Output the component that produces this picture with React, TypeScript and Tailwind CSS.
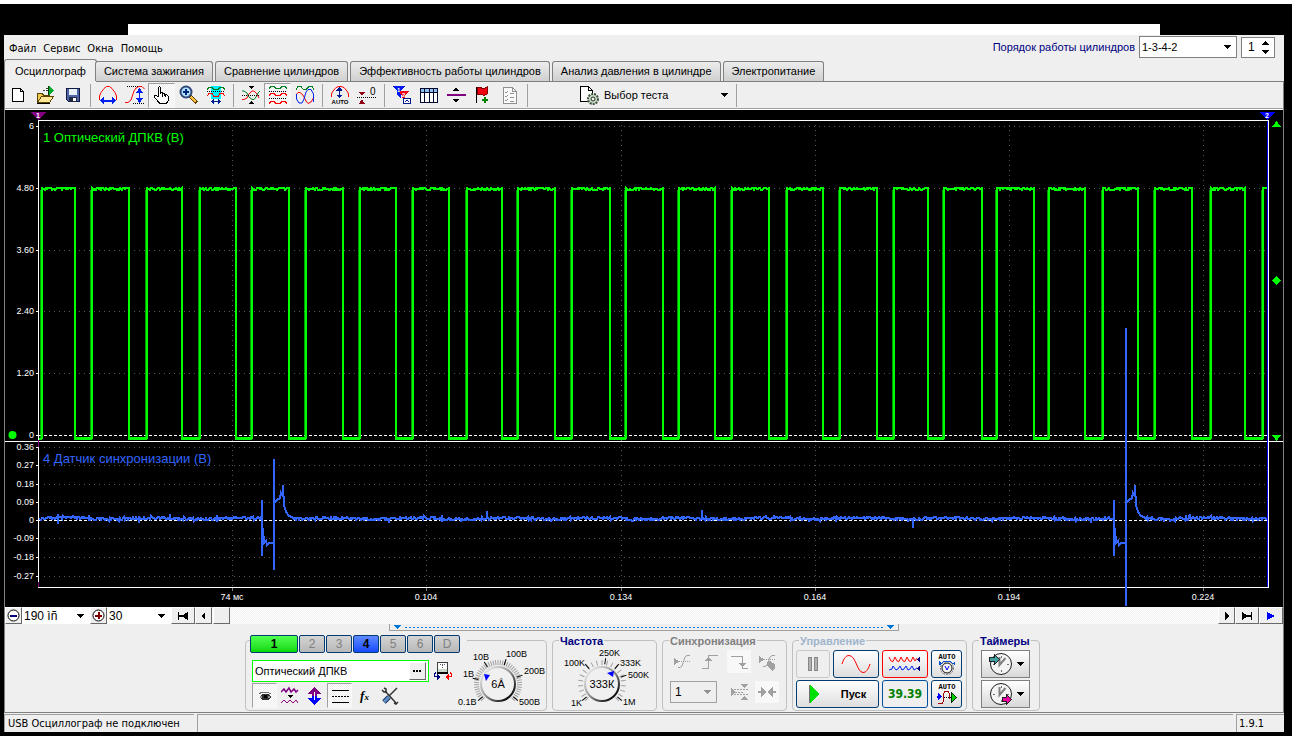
import { useState } from 'react';
import type { ReactNode } from 'react';
import clsx from 'clsx';

const tabs = [
  'Осциллограф',
  'Система зажигания',
  'Сравнение цилиндров',
  'Эффективность работы цилиндров',
  'Анализ давления в цилиндре',
  'Электропитание',
];

// start and end of every high level of the crank sensor signal
const pulses = [
  [42, 75], [92, 129], [147, 182], [200, 236], [252, 289], [306, 343], [360, 396], [413, 449],
  [467, 502], [518, 555], [572, 610], [626, 663], [679, 715], [732, 769], [787, 823], [840, 877],
  [894, 928], [944, 982], [997, 1034], [1049, 1085], [1103, 1138], [1155, 1192], [1211, 1245], [1263, 1267],
];

const upperScale = [
  { y: 126, label: '6' },
  { y: 188, label: '4.80' },
  { y: 250, label: '3.60' },
  { y: 311, label: '2.40' },
  { y: 373, label: '1.20' },
  { y: 435, label: '0' },
];

const lowerScale = [
  { y: 447, label: '0.36' },
  { y: 465, label: '0.27' },
  { y: 484, label: '0.18' },
  { y: 502, label: '0.09' },
  { y: 520, label: '0' },
  { y: 538, label: '-0.09' },
  { y: 557, label: '-0.18' },
  { y: 576, label: '-0.27' },
];

const timeScale = [
  { x: 232, label: '74 мс' },
  { x: 426, label: '0.104' },
  { x: 621, label: '0.134' },
  { x: 815, label: '0.164' },
  { x: 1009, label: '0.194' },
  { x: 1203, label: '0.224' },
];

const noise = (n: number) => {
  const v = Math.sin(n * 12.9898) * 43758.5453;
  return v - Math.floor(v);
};

const crankPath = () => {
  let d = 'M39 439 L41 439';
  pulses.forEach(([start, end], i) => {
    d += ` L${start} 438 L${start} 188`;
    for (let x = start + 2; x < end - 1; x += 1) {
      d += ` L${x} ${188 + Math.floor(noise(x) * 2.6)}`;
    }
    d += ` L${end} 188`;
    if (i < pulses.length - 1) d += ` L${end} 439`;
  });
  return d;
};

const syncShape = (x0: number, top: number, bottom: number) => [
  ` L${x0} 518 L${x0} 500 L${x0} 556 L${x0 + 1} 528 L${x0 + 2} 543 L${x0 + 4} 541 L${x0 + 5} 545`,
  `L${x0 + 7} 543 L${x0 + 12} 543 L${x0 + 12} ${top} L${x0 + 12} ${bottom} L${x0 + 12} 503`,
  `L${x0 + 15} 500 L${x0 + 18} 498 L${x0 + 19} 493 L${x0 + 21} 497 L${x0 + 21} 485 L${x0 + 22} 505`,
  `L${x0 + 24} 512 L${x0 + 27} 516 L${x0 + 30} 517`,
].join(' ');

const syncPath = () => {
  let d = 'M39 519';
  for (let x = 41; x < 1268; x += 1) {
    if (x === 262) {
      d += syncShape(262, 459, 570);
      x = 293;
    } else if (x === 1114) {
      d += syncShape(1114, 328, 606);
      x = 1145;
    } else {
      const base = 518.5 + Math.sin(x / 14) * 0.7;
      d += ` L${x} ${Math.round(base + noise(x) * 3 - 1.5)}`;
    }
  }
  return d;
};

const Icon = ({ w = 20, h = 20, className, children }: { w?: number; h?: number; className?: string; children: ReactNode }) => (
  <svg width={w} height={h} viewBox={`0 0 ${w} ${h}`} fill="none" shapeRendering="crispEdges" className={clsx('shrink-0', className)} aria-hidden="true">
    {children}
  </svg>
);

const Arrow = ({ className }: { className?: string }) => (
  <Icon w={7} h={4} className={className}>
    <path d="M0 0H7L3.5 4Z" fill="currentColor" />
  </Icon>
);

const ToolButton = ({ label, pressed, narrow, children }: { label: string; pressed?: boolean; narrow?: boolean; children: ReactNode }) => (
  <button
    type="button"
    aria-label={label}
    className={clsx(
      'flex h-[25px] shrink-0 items-center justify-center',
      narrow ? 'w-[25px]' : 'w-[27px]',
      pressed && 'border border-[#f8f8f8] border-t-[#a0a0a0] border-l-[#a0a0a0] bg-[repeating-conic-gradient(#fff_0_25%,#ededed_0_50%)] bg-[length:2px_2px]',
    )}
  >
    {children}
  </button>
);

const Separator = () => <div className="mr-[3px] ml-1 h-[23px] w-px shrink-0 bg-[#a0a0a0]" />;

const Toolbar = () => (
  <div className="flex h-7 items-center border-t border-b border-t-[#808080] border-b-[#a0a0a0]">
    <ToolButton label="Новый">
      <Icon>
        <path d="M3.5 3.5H11.5L14.5 6.5V16.5H3.5Z" fill="#fff" stroke="#000" />
        <path d="M11.5 3.5V6.5H14.5" stroke="#000" />
      </Icon>
    </ToolButton>
    <ToolButton label="Открыть">
      <Icon>
        <path d="M1.5 8.5H6.5L7.5 10.5H13.5V17.5H1.5Z" fill="#f0c850" stroke="#5a4400" />
        <path d="M5.5 11.5H17.5L13.5 17.5H1.5Z" fill="#ffe898" stroke="#5a4400" />
        <path d="M1 18.5H14" stroke="#000" />
        <path d="M13 1V10L18 5.5Z" fill="#00a830" />
        <path d="M12.5 1V10" stroke="#003c00" />
        <path d="M7 5.5H12M9.5 3.5H12" stroke="#404040" strokeDasharray="2 1" />
      </Icon>
    </ToolButton>
    <ToolButton label="Сохранить">
      <Icon>
        <path d="M3.5 3.5H16.5V16.5H5.5L3.5 14.5Z" fill="#5064a8" stroke="#101840" />
        <path d="M6 4H14V10H6Z" fill="#e8f0f8" />
        <path d="M6 12H14V17H6Z" fill="#202840" />
        <path d="M10 13H13V16H10Z" fill="#fff" />
      </Icon>
    </ToolButton>
    <Separator />
    <ToolButton label="Период">
      <Icon>
        <path d="M1.5 15V11L3 7.5L6 3.5L8.5 1.5H11.5L14 3.5L17 7.5L18.5 11V15" stroke="#f00" shapeRendering="auto" />
        <path d="M5 15.5H15" stroke="#0020f0" strokeWidth="2" />
        <path d="M2 15.5L6 12V19ZM18 15.5L14 12V19Z" fill="#0020f0" />
      </Icon>
    </ToolButton>
    <ToolButton label="Амплитуда">
      <Icon>
        <path d="M0 17.5H3L6 15L9 6L11 3L14 1.5H17L19.5 4" stroke="#f00" shapeRendering="auto" />
        <path d="M2 1.5H13M8 18.5H19" stroke="#000" strokeDasharray="1 1" />
        <path d="M14.5 5V15" stroke="#0020f0" />
        <path d="M14.5 3L18 8H11ZM14.5 18L18 13H11Z" fill="#0020f0" />
      </Icon>
    </ToolButton>
    <ToolButton label="Рука" pressed>
      <Icon>
        <path d="M6.5 12V2.5L7.5 1.5L8.5 2.5V8.5V7.5H10.5V9.5V8.5H12.5V10.5V9.5H14.5L16.5 11.5V15L14.5 18.5H8L2.5 12.5V10.5H4.5L6.5 12.5" fill="#fff" stroke="#000" />
        <path d="M10.5 8V12M13.5 9V12" stroke="#000" />
      </Icon>
    </ToolButton>
    <ToolButton label="Масштаб">
      <Icon>
        <path d="M11 11L18 18" stroke="#604000" strokeWidth="4" />
        <path d="M12 12L17 17" stroke="#ffc040" strokeWidth="2" />
        <circle cx="7" cy="7" r="5.5" fill="#b4e0ff" stroke="#304878" strokeWidth="2" shapeRendering="auto" />
        <path d="M7 4V10M4 7H10" stroke="#002878" strokeWidth="2" />
      </Icon>
    </ToolButton>
    <ToolButton label="Фрагмент">
      <Icon>
        <path d="M5 1H15V19H5Z" fill="#00f0ff" />
        <path d="M1 4.5L3 2.5H6L8 4.5H12L14 2.5H17L19 4.5" stroke="#008020" />
        <path d="M1 6.5H19" stroke="#000" strokeDasharray="1 1" />
        <path d="M1 11L3 8.5H6L8 11.5H12L14 8.5H17L19 11" stroke="#f00" />
        <path d="M5 14H15V19H5Z" fill="#e8ffff" />
        <path d="M6 16.5H14" stroke="#001890" />
        <path d="M5 16.5L8 14V19ZM15 16.5L12 14V19Z" fill="#001890" />
      </Icon>
    </ToolButton>
    <Separator />
    <ToolButton label="Центрировать">
      <Icon>
        <path d="M7 1H13L10 4ZM7 19H13L10 16Z" fill="#000" />
        <path d="M1 14.5H3L6 13L8 9L11 6H13L16 9L18 13" stroke="#f00" shapeRendering="auto" />
        <path d="M1 6H3L6 8L8 12L11 14.5H13L15 12L17 8L19 6" stroke="#008020" shapeRendering="auto" />
        <path d="M1 10.5H19" stroke="#000" strokeDasharray="1 1" />
      </Icon>
    </ToolButton>
    <ToolButton label="Раздельно" pressed>
      <Icon>
        <path d="M1 3.5L3 1.5H6L8 3.5H12L14 1.5H17L19 3.5" stroke="#008020" />
        <path d="M1 6.5H19M1 13.5H19" stroke="#000" strokeDasharray="1 1" />
        <path d="M1 10.5L3 8.5H6L8 10.5H12L14 8.5H17L19 10.5M1 18.5L3 16.5H6L8 18.5H12L14 16.5H17L19 18.5" stroke="#f00" />
      </Icon>
    </ToolButton>
    <ToolButton label="Совместно">
      <Icon>
        <path d="M1 5L3 1.5H6L8.5 4.5H11L14 1.5H17L19 5" stroke="#008020" />
        <path d="M1 10L3 7.5H5L8 10L11 16L13 18.5L16 17L18.5 13" stroke="#f00" shapeRendering="auto" />
        <path d="M1.5 9V14L4 18H7L9 14L11 7L13 4.5H16L18.5 9V17" stroke="#0020f0" shapeRendering="auto" />
      </Icon>
    </ToolButton>
    <Separator />
    <ToolButton label="Авто">
      <Icon>
        <path d="M1.5 12V9L3 6L6 2.5L9 1.5H11L14 2.5L17 6L18.5 9V12" stroke="#f00" shapeRendering="auto" />
        <path d="M9.5 3V12" stroke="#001890" />
        <path d="M9.5 2L12.5 5.5H6.5ZM9.5 13L12.5 9.5H6.5Z" fill="#001890" />
        <text x="10" y="19" textAnchor="middle" fontSize="6" fontWeight="bold" fill="#000" className="font-['Liberation_Sans',sans-serif]">AUTO</text>
      </Icon>
    </ToolButton>
    <ToolButton label="Ноль">
      <Icon>
        <path d="M2 7H8L5 11ZM2 19H8L5 14Z" fill="#900010" />
        <path d="M2 7.5H8M2 18.5H8" stroke="#900010" />
        <path d="M0 12.5H19" stroke="#000" strokeDasharray="1 1" />
        <text x="13" y="10" fontSize="10" fill="#000" className="font-['Liberation_Sans',sans-serif]">0</text>
      </Icon>
    </ToolButton>
    <Separator />
    <ToolButton label="Фильтр">
      <Icon>
        <path d="M0 1H13L9 6V13L5 10V6Z" fill="#0018f0" />
        <path d="M7 6H17L13 11V15L10 13V11Z" fill="#f00010" />
        <path d="M11.5 13.5H18.5V18.5H11.5Z" fill="#fff" stroke="#001890" />
        <path d="M13 17L15 15.5L17 16.5" stroke="#001890" />
        <text x="5" y="7" fontSize="6" fontWeight="bold" fill="#fff">1</text>
        <text x="10" y="12" fontSize="6" fontWeight="bold" fill="#fff">2</text>
      </Icon>
    </ToolButton>
    <ToolButton label="Таблица">
      <Icon>
        <path d="M1.5 3.5H18.5V17.5H1.5Z" fill="#fff" stroke="#000830" />
        <path d="M2 4H18V7H2Z" fill="#90c0f0" />
        <path d="M1 7.5H19M5.5 4V17M10.5 4V17M14.5 4V17" stroke="#000830" />
      </Icon>
    </ToolButton>
    <ToolButton label="Разделить">
      <Icon>
        <path d="M10 2L13 6H7ZM10 18L13 14H7Z" fill="#000" />
        <path d="M1 10H20" stroke="#800080" strokeWidth="2" />
      </Icon>
    </ToolButton>
    <ToolButton label="Метка">
      <Icon>
        <path d="M3.5 2V18" stroke="#000" />
        <path d="M4 3L7 2L10 4L14 2V9L11 10.5L8 9L4 10Z" fill="#f00010" stroke="#800000" />
        <path d="M12 12V18M9 15H15" stroke="#008000" strokeWidth="2" />
      </Icon>
    </ToolButton>
    <ToolButton label="Отчет">
      <Icon>
        <path d="M3.5 2.5H12.5L16.5 6.5V18.5H3.5Z" fill="#fafafa" stroke="#909090" />
        <path d="M12.5 2.5V6.5H16.5M5 7L6 8L8 6M5 11L6 12L8 10M5 15L6 16L8 14M10 8.5H14M10 12.5H14M10 16.5H14" stroke="#909090" />
      </Icon>
    </ToolButton>
    <Separator />
    <button type="button" className="ml-12 flex w-[153px] items-center gap-1 text-left text-[11px]">
      <Icon w={21} h={20}>
        <path d="M1.5 1.5H9.5L13.5 5.5V16.5H1.5Z" fill="#fff" stroke="#000" />
        <path d="M9.5 1.5V5.5H13.5" stroke="#000" />
        <circle cx="14" cy="14" r="5" fill="#c8dcc8" stroke="#405040" strokeWidth="2" strokeDasharray="2 1" shapeRendering="auto" />
        <circle cx="14" cy="14" r="2" fill="#f0f0f0" stroke="#203020" shapeRendering="auto" />
      </Icon>
      <span>Выбор теста</span>
      <Arrow className="mr-1 ml-auto" />
    </button>
    <Separator />
  </div>
);

const Scope = () => (
  <svg viewBox="5 110 1278 497" className="block h-auto w-full bg-black font-['Liberation_Sans',sans-serif] text-[9px]" shapeRendering="crispEdges" role="img">
    <g stroke="#585858" strokeDasharray="1 4">
      {[126, 188, 250, 311, 373, 447, 465, 484, 502, 538, 557, 576].map((y) => (
        <path key={y} d={`M44 ${y + 0.5}H1267`} />
      ))}
      {timeScale.map(({ x }) => (
        <path key={x} d={`M${x + 0.5} 125V587`} />
      ))}
    </g>
    <path d="M39 435.5H1267M39 520.5H1267" stroke="#fff" strokeDasharray="3 2" />
    <path d={pulses.map(([start]) => `M${start - 1} 190V439`).join('')} stroke="#00ff00" strokeWidth="2" opacity="0.6" />
    <path d={crankPath()} fill="none" stroke="#00ff00" strokeWidth="2" />
    <path d={pulses.slice(0, -1).map(([, end], i) => `M${end - 1} 438.5H${pulses[i + 1][0]}`).join('')} stroke="#00ff00" strokeWidth="3" />
    <path d="M38.5 120V588M1268.5 120V588M38 120.5H1269M5 441.5H1283M38 587.5H1269" stroke="#fff" />
    <path d="M1267.5 121V587" stroke="#0000ff" />
    <path d="M38.5 112V120M38.5 440V447M38.5 582V587" stroke="#800080" />
    <path d={syncPath()} fill="none" stroke="#3366ff" strokeWidth="2" />
    <path d="M58 514V524M89 515V520M139 518V523M170 514V518M389 518V523M487 511V519M702 510V518M913 518V528M1091 518V523M1190 514V518" stroke="#3366ff" strokeWidth="2" />
    <g fill="#fff" textAnchor="end">
      {[...upperScale, ...lowerScale].map(({ y, label }) => (
        <g key={y}>
          <text x="34" y={y + 3}>{label}</text>
          <path d={`M36 ${y + 0.5}H39`} stroke="#fff" />
        </g>
      ))}
    </g>
    <g fill="#fff" textAnchor="middle">
      {timeScale.map(({ x, label }) => (
        <g key={x}>
          <text x={x} y="600">{label}</text>
          <path d={`M${x + 0.5} 588V591`} stroke="#808080" />
        </g>
      ))}
    </g>
    <text x="43" y="142" fill="#00ff00" className="text-[13px]">1 Оптический ДПКВ (В)</text>
    <text x="43" y="463" fill="#3366ff" className="text-[13px]">4 Датчик синхронизации (В)</text>
    <path d="M31 112H46L38.5 120Z" fill="#800080" />
    <path d="M1260 112H1275L1267.5 120Z" fill="#0000ff" />
    <text x="38" y="118" textAnchor="middle" fontWeight="bold" fill="#fff" className="text-[7px]">1</text>
    <text x="1267" y="118" textAnchor="middle" fontWeight="bold" fill="#fff" className="text-[7px]">2</text>
    <path d="M1272 127H1281L1276.5 121ZM1272 435H1281L1276.5 441ZM1276.5 276L1281 280.5L1276.5 285L1272 280.5Z" fill="#00ff00" />
    <circle cx="12.5" cy="435" r="4" fill="#00ff00" shapeRendering="auto" />
  </svg>
);

const raised = 'flex items-center justify-center border border-white border-r-[#696969] border-b-[#696969] bg-[#efefef]';

const ScrollRow = () => (
  <div className="flex h-[17px] font-['Liberation_Sans',sans-serif] text-[12px]">
    <button type="button" aria-label="Уменьшить" className={clsx(raised, 'w-[17px]')}>
      <Icon w={13} h={13}>
        <circle cx="6.5" cy="6.5" r="5.5" fill="#fff" stroke="#000" shapeRendering="auto" />
        <path d="M3 6.5H10" stroke="#000080" strokeWidth="2" />
      </Icon>
    </button>
    <div className="relative w-[68px]">
      <select aria-label="Развертка" className="h-full w-full appearance-none bg-white pl-0.5">
        <option>190 ìñ</option>
      </select>
      <Arrow className="pointer-events-none absolute top-[7px] right-[6px]" />
    </div>
    <button type="button" aria-label="Увеличить" className={clsx(raised, 'w-[17px]')}>
      <Icon w={13} h={13}>
        <circle cx="6.5" cy="6.5" r="5.5" fill="#fff" stroke="#000" shapeRendering="auto" />
        <path d="M3 6.5H10M6.5 3V10" stroke="#800000" strokeWidth="2" />
      </Icon>
    </button>
    <div className="relative w-[64px]">
      <select aria-label="Усиление" className="h-full w-full appearance-none bg-white pl-0.5">
        <option>30</option>
      </select>
      <Arrow className="pointer-events-none absolute top-[7px] right-[6px]" />
    </div>
    <button type="button" aria-label="В начало" className={clsx(raised, 'w-6')}>
      <Icon w={12} h={8}>
        <path d="M1 0H2V8H1ZM11 0V8L6 5H2V3H6Z" fill="#000" />
      </Icon>
    </button>
    <button type="button" aria-label="Назад" className={clsx(raised, 'w-[17px]')}>
      <Icon w={5} h={8}>
        <path d="M4 0V8L0 4Z" fill="#000" />
      </Icon>
    </button>
    <div className="flex flex-1 bg-[repeating-conic-gradient(#fff_0_25%,#f0f0f0_0_50%)] bg-[length:2px_2px]">
      <div className={clsx(raised, 'ml-px w-[17px]')} />
    </div>
    <button type="button" aria-label="Вперед" className={clsx(raised, 'w-[17px]')}>
      <Icon w={5} h={8}>
        <path d="M1 0V8L5 4Z" fill="#000" />
      </Icon>
    </button>
    <button type="button" aria-label="В конец" className={clsx(raised, 'w-6')}>
      <Icon w={12} h={8}>
        <path d="M10 0H11V8H10ZM1 0V8L6 5H10V3H6Z" fill="#000" />
      </Icon>
    </button>
    <button type="button" aria-label="Воспроизвести" className={clsx(raised, 'w-6')}>
      <Icon w={8} h={8}>
        <path d="M0 0V8L8 4Z" fill="#0000ff" />
      </Icon>
    </button>
  </div>
);

const Group = ({ title, titleClass = 'text-[#000080]', className, children }: { title?: string; titleClass?: string; className?: string; children: ReactNode }) => (
  <section className={clsx('relative h-[71px] shrink-0 rounded-[4px] border border-[#c0c0c0]', className)}>
    {title && (
      <h2 className={clsx('absolute -top-[6px] left-[6px] bg-[#efefef] px-px text-[11px] leading-3 font-bold', titleClass)}>{title}</h2>
    )}
    {children}
  </section>
);

type KnobProps = {
  value: string;
  steps: number;
  marks: { x: number; y: number; text: string; angle: number }[];
  pointer: [number, number, number];
};

const Knob = ({ value, steps, marks, pointer }: KnobProps) => {
  const ticks = Array.from({ length: steps + 1 }, (_, i) => -135 + (i * 270) / steps);
  return (
    <svg width="92" height="69" viewBox="0 0 92 69" className="shrink-0 font-['Liberation_Sans',sans-serif]" role="img" aria-label={value}>
      <defs>
        <linearGradient id={`rim-${steps}`} x1="0.1" y1="0.1" x2="0.9" y2="0.9">
          <stop offset="0" stopColor="#e8e8e8" />
          <stop offset="0.5" stopColor="#909090" />
          <stop offset="1" stopColor="#000" />
        </linearGradient>
      </defs>
      {ticks.map((angle) => (
        <path key={angle} d="M43 19V24" stroke="#a0a0a0" transform={`rotate(${angle} 43 43)`} />
      ))}
      {marks.map(({ x, y, text, angle }) => (
        <g key={text}>
          <path d="M43 17V23" stroke="#000" transform={`rotate(${angle} 43 43)`} />
          <text x={x} y={y} fontSize="9">{text}</text>
        </g>
      ))}
      <circle cx="43" cy="43" r="17" fill="#f0f0f0" stroke={`url(#rim-${steps})`} strokeWidth="2" />
      <path d="M-3 -3L3 -2L-1 4Z" fill="#0000ff" transform={`translate(${pointer[0]} ${pointer[1]}) rotate(${pointer[2]})`} />
      <text x="43" y="47" textAnchor="middle" fontSize="11">{value}</text>
    </svg>
  );
};

const channels = ['1', '2', '3', '4', '5', '6', 'D'];

const ChannelGroup = ({ channel, setChannel }: { channel: string; setChannel: (name: string) => void }) => (
  <Group className="flex w-[302px] pl-1">
    <div className="w-[205px] shrink-0">
      <div className="-mt-[6px] flex w-max gap-px bg-[#efefef] pr-[7px]">
        {channels.map((name) => (
          <button
            key={name}
            type="button"
            onClick={() => setChannel(name)}
            className={clsx(
              'h-[18px] rounded-[2px] border border-[#003c74] text-[12px] leading-none',
              name === channel && 'w-12 bg-linear-to-b from-[#50ff50] to-[#00d800] font-bold',
              name === '4' && name !== channel && 'w-[26px] bg-linear-to-b from-[#6088ff] to-[#1848ff] font-bold',
              name !== '4' && name !== channel && 'w-[26px] bg-linear-to-b from-[#d4d4d4] to-[#b8b8b8] text-[#808080]',
            )}
          >
            {name}
          </button>
        ))}
      </div>
      <div className="mt-[7px] ml-0.5 flex items-center gap-[5px]">
        <div className="flex h-[22px] w-[177px] shrink-0 items-center border border-[#00ff00] bg-white pr-0.5">
          <input aria-label="Название канала" defaultValue="Оптический ДПКВ" className="min-w-0 flex-1 pl-[2px] text-[11px] outline-none" />
          <button type="button" aria-label="Выбрать" className={clsx(raised, 'h-[18px] w-[17px]')}>
            <Icon w={9} h={2}>
              <path d="M0 0H2V2H0ZM3 0H5V2H3ZM6 0H8V2H6Z" fill="#000" />
            </Icon>
          </button>
        </div>
        <Icon w={18} h={20}>
          <path d="M3.5 1.5H13.5V11.5H3.5Z" fill="#fff" stroke="#404040" />
          <path d="M4 8H13V11H4Z" fill="#c8d8c8" />
          <path d="M3 12H14" stroke="#000" strokeWidth="2" />
          <path d="M6 3.5H11M8.5 4V7" stroke="#606060" strokeDasharray="1 1" />
          <path d="M3 13V19L7 16Z" fill="#000080" />
          <path d="M2 11.5L0.5 13V15L4 16.5" stroke="#000080" />
          <path d="M15 13V19L11 16Z" fill="#f00" />
          <path d="M16 11.5L17.5 13V15L14 16.5" stroke="#f00" />
        </Icon>
      </div>
      <div className="mt-px ml-0.5 flex">
        <ToolButton label="Показать" pressed narrow>
          <Icon w={14} h={12}>
            <path d="M1 4L4 2H9L13 4" stroke="#707070" />
            <path d="M1 7L4 4H10L13 6V8L10 10H4Z" fill="#303030" />
            <path d="M2 6H4V8H2ZM10 6H12V8H10Z" fill="#909090" />
            <path d="M6 5H9V8H6Z" fill="#000" />
          </Icon>
        </ToolButton>
        <ToolButton label="Инверсия" narrow>
          <Icon w={18}>
            <path d="M0 6L3 3L5 6L8 2L10 6L13 3L15 6L17 4" stroke="#800080" strokeWidth="1.5" shapeRendering="auto" />
            <path d="M6 9H12L9 12Z" fill="#000" />
            <path d="M0 17L3 14L6 17L9 14L12 17L15 14L17 17" stroke="#900080" shapeRendering="auto" />
          </Icon>
        </ToolButton>
        <ToolButton label="Сместить" narrow>
          <Icon w={15}>
            <path d="M7.5 1L14 8H10V10H5V8H1Z" fill="#800080" />
            <path d="M7.5 19L14 12H10V10H5V12H1Z" fill="#0000ff" />
            <path d="M7 6H8V14H7Z" fill="#fff" />
          </Icon>
        </ToolButton>
        <ToolButton label="Линии" pressed narrow>
          <Icon w={18}>
            <path d="M1 4.5H18M1 16.5H18" stroke="#000" />
            <path d="M1 10.5H18" stroke="#000" strokeDasharray="2 1" />
          </Icon>
        </ToolButton>
        <ToolButton label="Функция" narrow>
          <span className="font-['Liberation_Serif',serif] text-[13px] font-bold italic">
            f<span className="text-[9px]">x</span>
          </span>
        </ToolButton>
        <ToolButton label="Настройка" narrow>
          <Icon w={18} className="[shape-rendering:auto]">
            <path d="M4 5L15 17" stroke="#303030" strokeWidth="1.5" />
            <path d="M1 4L3 6H5V3L3 2M13 17L15 18L17 16" stroke="#303030" strokeWidth="1.5" />
            <path d="M16 2L8 10" stroke="#303030" strokeWidth="1.5" />
            <path d="M8 11L3 16" stroke="#103060" strokeWidth="5" />
            <path d="M8 11L3 16" stroke="#6090c8" strokeWidth="3" />
          </Icon>
        </ToolButton>
      </div>
    </div>
    <Knob
      value="6Â"
      steps={44}
      pointer={[32, 36, 0]}
      marks={[
        { x: 18, y: 19, text: '10В', angle: -32 },
        { x: 51, y: 16, text: '100В', angle: 18 },
        { x: 8, y: 36, text: '1В', angle: -77 },
        { x: 69, y: 33, text: '200В', angle: 70 },
        { x: 3, y: 64, text: '0.1В', angle: -130 },
        { x: 64, y: 64, text: '500В', angle: 130 },
      ]}
    />
  </Group>
);

const syncIcons = [
  <g key="a">
    <path d="M1 5V12L6 8.5Z" fill="#a0a0a0" />
    <path d="M6 8.5H18" stroke="#a0a0a0" strokeDasharray="1 1" />
    <path d="M5 14.5H7L9 13L12 4L14 2.5H17" stroke="#a0a0a0" shapeRendering="auto" />
  </g>,
  <g key="b">
    <path d="M1 15.5H7.5V2.5H17" stroke="#a0a0a0" />
    <path d="M7.5 4L11 8H4Z" fill="#a0a0a0" />
  </g>,
  <g key="c">
    <path d="M1 3.5H12.5V15.5H18" stroke="#a0a0a0" />
    <path d="M12.5 14L16 10H9Z" fill="#a0a0a0" />
  </g>,
  <g key="d">
    <path d="M1 3V10L6 6.5ZM9 9L12 8L17 11V15L14 18L9 13Z" fill="#a0a0a0" />
    <path d="M6 6.5H18" stroke="#a0a0a0" strokeDasharray="1 1" />
    <path d="M5 13.5H7L9 12L12 4L14 2.5H17" stroke="#a0a0a0" shapeRendering="auto" />
  </g>,
];

const SyncGroup = () => (
  <Group title="Синхронизация" titleClass="text-[#808080]" className="w-[125px] px-[7px] pt-[9px]">
    <div className="flex justify-between">
      {syncIcons.map((drawing, i) => (
        <button
          key={i}
          type="button"
          disabled
          aria-label={`Режим ${i + 1}`}
          className={clsx('flex h-[23px] w-6 items-center justify-center', i === 2 && 'bg-[#f8f8f8]')}
        >
          <Icon w={18} h={18}>{drawing}</Icon>
        </button>
      ))}
    </div>
    <div className="mt-[7px] flex items-center">
      <div className="relative w-[47px]">
        <select disabled aria-label="Канал" className="h-[22px] w-full appearance-none border border-[#a0a0a0] pl-1 text-[12px] opacity-100">
          <option>1</option>
        </select>
        <Arrow className="pointer-events-none absolute top-[9px] right-[6px] text-[#909090]" />
      </div>
      <button type="button" disabled aria-label="Уровень" className="ml-auto flex size-6 items-center justify-center">
        <Icon w={18} h={18}>
          <path d="M1 5V13L5 9ZM11 1H18L14.5 5ZM11 17H18L14.5 13Z" fill="#a0a0a0" />
          <path d="M4 6.5H18M4 11.5H18M5 9H14" stroke="#a0a0a0" strokeDasharray="2 1" />
        </Icon>
      </button>
      <button type="button" disabled aria-label="Сжать" className="ml-1 flex h-[22px] w-6 items-center justify-center bg-[#f8f8f8]">
        <Icon w={18} h={12}>
          <path d="M0 6H4M14 6H18" stroke="#a0a0a0" strokeWidth="2" />
          <path d="M3 1V11L9 6ZM15 1V11L9 6Z" fill="#a0a0a0" />
        </Icon>
      </button>
    </div>
  </Group>
);

const command = 'flex h-7 items-center justify-center rounded-[3px] border bg-linear-to-b from-white to-[#dedede]';

const AutoText = () => (
  <text x="11" y="7" textAnchor="middle" fontSize="7" fontWeight="bold" fill="#000" className="font-['Liberation_Mono',monospace]">AUTO</text>
);

const ControlGroup = () => (
  <Group title="Управление" titleClass="text-[#a0b4cc]" className="flex w-[175px] gap-[3px] pt-[9px] pl-[3px]">
    <div className="flex flex-col gap-0.5">
      <div className="flex gap-[3px]">
        <button type="button" disabled aria-label="Пауза" className="flex h-7 w-[34px] items-center justify-center rounded-[3px] border border-[#c8c8c8]">
          <Icon w={12} h={16}>
            <path d="M1.5 1.5H4.5V14.5H1.5ZM7.5 1.5H10.5V14.5H7.5Z" fill="#b0b0b0" stroke="#888" />
          </Icon>
        </button>
        <button type="button" aria-label="Один кадр" className={clsx(command, 'w-[46px] border-[#003c74]')}>
          <Icon w={30} h={20}>
            <path d="M1 10C3 4 5 1.5 8 1.5C15 1.5 16 18.5 22 18.5C25 18.5 27 16 29 10" stroke="#f00" shapeRendering="auto" />
          </Icon>
        </button>
      </div>
      <button type="button" className={clsx(command, 'w-[83px] border-[#003c74] text-[11px] font-bold')}>
        <Icon w={12} h={20} className="mr-5">
          <path d="M1 1L11 10L1 19Z" fill="#00e000" />
          <path d="M0.5 1V19" stroke="#707070" />
        </Icon>
        Пуск
      </button>
    </div>
    <div className="flex flex-col gap-0.5">
      <button type="button" aria-label="Непрерывно" className={clsx(command, 'w-[46px] border-[#f00]')}>
        <Icon w={34} h={18}>
          <path d="M1 2L3 6L5 6.5L7 2L9 6L11 6.5L13 2L15 6L17 6.5L19 2L21 6L23 6.5L25 2L27 6L29 3" stroke="#f00" shapeRendering="auto" />
          <path d="M1 15L4 14L5 11L8 15L10 14L12 11L14 15L16 14L18 11L20 15L22 14L24 11L26 15L29 13" stroke="#0020f0" shapeRendering="auto" />
          <path d="M32 2V7L29 4.5ZM32 11V16L29 13.5Z" fill="#000080" />
        </Icon>
      </button>
      <output className="flex h-7 w-[46px] items-center justify-center rounded-[3px] border border-[#0050a0] bg-[#efefef] font-['DejaVu_Sans_Condensed','DejaVu_Sans',sans-serif] text-[12px] font-bold text-[#008000]">
        39.39
      </output>
    </div>
    <div className="flex flex-col gap-0.5">
      <button type="button" aria-label="Автоматическая настройка" className={clsx(command, 'w-[31px] border-[#003c74]')}>
        <Icon w={22} h={24}>
          <AutoText />
          <circle cx="11" cy="16" r="6.5" stroke="#707070" strokeDasharray="2 1" shapeRendering="auto" />
          <circle cx="11" cy="16" r="5" fill="#f4f4f4" stroke="#101010" shapeRendering="auto" />
          <path d="M9 14L11 18L13 14" stroke="#0000ff" shapeRendering="auto" />
          <path d="M5 11.5L8 9.5H14L17 11.5" stroke="#0050d0" />
          <path d="M3 13V9L6 12ZM19 13V9L16 12Z" fill="#0050d0" />
        </Icon>
      </button>
      <button type="button" aria-label="Автоматический запуск" className={clsx(command, 'w-[31px] border-[#003c74]')}>
        <Icon w={22} h={24}>
          <AutoText />
          <path d="M1 15H4" stroke="#0000ff" strokeWidth="2" />
          <path d="M2 11V18L6 14.5Z" fill="#0000ff" />
          <path d="M2 21.5H6L7.5 19V12L9 9.5H12L13.5 12V17" stroke="#a00000" />
          <path d="M8 15.5H15" stroke="#000" strokeDasharray="1 1" />
          <path d="M15.5 10.5V20.5L20.5 15.5Z" fill="#00d000" stroke="#003000" />
        </Icon>
      </button>
    </div>
  </Group>
);

const TimerGroup = () => (
  <Group title="Таймеры" className="flex w-[68px] flex-col gap-0.5 pt-[9px] pl-2">
    {['#40a0a0', '#f000a0'].map((color, i) => (
      <button
        key={color}
        type="button"
        aria-label={i ? 'Таймер остановки' : 'Таймер запуска'}
        className="flex h-7 w-[49px] items-center justify-center gap-[3px] border border-[#808080] bg-linear-to-b from-white to-[#d8d8d8]"
      >
        <Icon w={26} h={24}>
          <circle cx="13" cy="12" r="10.5" fill="#f4f4f4" stroke="#202020" shapeRendering="auto" />
          <path d="M13 4V6M13 18V20M5 12H7M19 12H21" stroke="#707070" />
          <path d="M11.5 5V13L17.5 6" stroke="#808080" strokeWidth="2" shapeRendering="auto" />
          <path d={i ? 'M14 15.5H18.5V12.5L23.5 17.5L18.5 22.5V19.5H14Z' : 'M1.5 5.5H6.5V2.5L11.5 7.5L6.5 12.5V9.5H1.5Z'} fill={color} stroke="#202020" />
        </Icon>
        <Arrow />
      </button>
    ))}
  </Group>
);

const App = () => {
  const [tab, setTab] = useState(tabs[0]);
  const [channel, setChannel] = useState('1');

  return (
    <div className="border-t-4 border-r-4 border-white bg-black pt-5 pr-2 pb-1 pl-1 font-['Liberation_Sans',sans-serif] text-[11px] text-black">
      <div className="mx-[124px] h-[11px] bg-white" />
      <div className="bg-[#efefef]">
        {/* Menu */}
        <header className="flex h-6 items-start">
          <nav className="flex gap-[7px] pt-2 pl-[5px] font-['DejaVu_Sans_Condensed','DejaVu_Sans',sans-serif] leading-3">
            {['Файл', 'Сервис', 'Окна', 'Помощь'].map((item) => (
              <a key={item} href="#">{item}</a>
            ))}
          </nav>
          <div className="mt-px mr-[9px] ml-auto flex items-center gap-1">
            <label htmlFor="order" className="text-[#000080]">Порядок работы цилиндров</label>
            <div className="relative w-[98px]">
              <select id="order" className="block h-[22px] w-full appearance-none border border-[#808080] bg-white pl-0.5">
                <option>1-3-4-2</option>
              </select>
              <Arrow className="pointer-events-none absolute top-[9px] right-[6px]" />
            </div>
            <div className="flex h-[21px] w-[34px] items-center border border-[#808080] bg-white">
              <input aria-label="Номер цилиндра" defaultValue="1" className="w-5 pl-[6px] text-[12px] outline-none" />
              <div className="flex flex-col gap-[5px]">
                <button type="button" aria-label="Больше">
                  <Arrow className="rotate-180" />
                </button>
                <button type="button" aria-label="Меньше">
                  <Arrow />
                </button>
              </div>
            </div>
          </div>
        </header>

        {/* Tabs */}
        <div role="tablist" className="flex h-[22px] items-end gap-0.5">
          {tabs.map((name) => (
            <button
              key={name}
              type="button"
              role="tab"
              aria-selected={name === tab}
              onClick={() => setTab(name)}
              className={clsx(
                'rounded-t-[3px] border border-b-0 border-[#808080] whitespace-nowrap',
                name === tab ? '-mr-1 -mb-px h-[23px] bg-[#efefef] px-[10px]' : 'h-5 bg-linear-to-b from-[#ececec] to-[#d0d0d0] px-2',
              )}
            >
              {name}
            </button>
          ))}
        </div>

        <main className="border-x border-[#808080]">
          <Toolbar />
          <div className="h-px bg-white" />
          <Scope />
          <ScrollRow />
          <div className="mx-auto flex h-[7px] w-[510px] max-w-full items-center justify-between border border-t-0 border-[#a0a0a0] px-1 text-[#0078d7]">
            <Arrow />
            <div className="mx-1 h-px flex-1 bg-[repeating-linear-gradient(90deg,#0078d7_0_2px,transparent_2px_4px)]" />
            <Arrow />
          </div>
          <div className="flex justify-center gap-[5px] pt-[9px] pr-[3px]">
            <ChannelGroup channel={channel} setChannel={setChannel} />
            <Group title="Частота" className="flex w-[105px] pl-[6px]">
              <Knob
                value="333К"
                steps={20}
                pointer={[52, 33, 90]}
                marks={[
                  { x: 40, y: 15, text: '250K', angle: 8 },
                  { x: 5, y: 25, text: '100K', angle: -40 },
                  { x: 61, y: 25, text: '333K', angle: 40 },
                  { x: 69, y: 37, text: '500K', angle: 70 },
                  { x: 12, y: 65, text: '1K', angle: -130 },
                  { x: 64, y: 64, text: '1M', angle: 130 },
                ]}
              />
            </Group>
            <SyncGroup />
            <ControlGroup />
            <TimerGroup />
          </div>
          <div className="mt-px h-px bg-[#808080]" />
        </main>

        <footer className="flex h-[19px] gap-[3px] pt-px font-['DejaVu_Sans_Condensed','DejaVu_Sans',sans-serif]">
          <div className="w-[190px] border-t border-l border-[#a0a0a0] pl-[3px] leading-[18px] whitespace-nowrap">USB Осциллограф не подключен</div>
          <div className="flex-1 border-t border-l border-[#a0a0a0]" />
          <div className="w-12 border-t border-l border-[#a0a0a0] pl-0.5 leading-[18px]">1.9.1</div>
        </footer>
      </div>
    </div>
  );
};

export default App;
